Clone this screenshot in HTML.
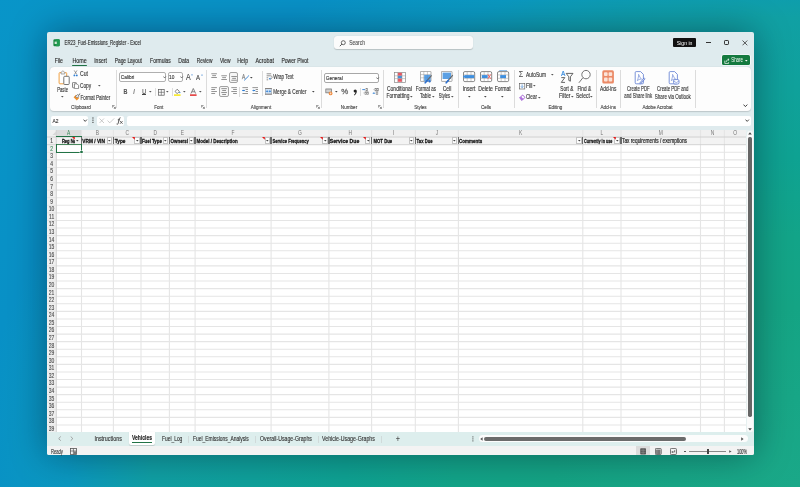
<!DOCTYPE html>
<html><head><meta charset="utf-8"><style>
html,body{margin:0;padding:0;}
body{width:800px;height:487px;overflow:hidden;position:relative;font-family:"Liberation Sans",sans-serif;
background:radial-gradient(1380px 1000px at 800px 487px,#1aa888 0%,#14a484 18%,#12a488 25%,#0ea292 33%,#10a0a4 47%,#0a98c0 53%,#0890c6 60%,#0894c6 70%,#0896cc 82%);}
.t{position:absolute;white-space:pre;line-height:10px;transform-origin:0 5px;}
.r{position:absolute;}
</style></head><body><div style="position:absolute;left:0;top:0;width:800px;height:487px;filter:grayscale(0.01)">
<div class="r" style="left:47.00px;top:32.00px;width:707.00px;height:423.40px;background:#dfebee;border-radius:2px;box-shadow:0 0 36px rgba(0,10,30,0.42);"></div>
<svg class="r" style="left:52.60px;top:38.70px;" width="8" height="8" viewBox="0 0 8 8"><rect x="0.4" y="0.3" width="6.3" height="7" rx="1.2" fill="#17853f"/><rect x="2.6" y="0.3" width="4.1" height="7" rx="0.8" fill="#1f9a50"/><rect x="1.6" y="2.6" width="2.2" height="2.4" fill="#cfe8d6"/></svg>
<div class="r" style="left:334.20px;top:36.30px;width:138.80px;height:12.90px;background:#fbfbfb;border-radius:3px;box-shadow:0 0.5px 1px rgba(0,0,0,0.18);"></div>
<svg class="r" style="left:338.50px;top:39.50px;" width="7" height="7" viewBox="0 0 7 7"><circle cx="4.3" cy="2.7" r="2" fill="none" stroke="#444" stroke-width="0.8"/><line x1="2.9" y1="4.1" x2="0.8" y2="6.2" stroke="#444" stroke-width="0.9"/></svg>
<div class="r" style="left:673.20px;top:37.90px;width:22.60px;height:9.20px;background:#111;border-radius:1px;"></div>
<div class="r" style="left:706.30px;top:42.30px;width:4.40px;height:0.80px;background:#333;"></div>
<div class="r" style="left:724.20px;top:40.40px;width:4.80px;height:4.60px;border:0.8px solid #333;border-radius:1.2px;box-sizing:border-box;"></div>
<svg class="r" style="left:742.00px;top:40.00px;" width="6" height="6" viewBox="0 0 6 6"><path d="M0.5 0.5 L5.3 5.3 M5.3 0.5 L0.5 5.3" stroke="#333" stroke-width="0.8"/></svg>
<div class="r" style="left:72.40px;top:64.60px;width:14.30px;height:1.30px;background:#217346;border-radius:1px;"></div>
<div class="r" style="left:722.20px;top:54.50px;width:27.40px;height:10.80px;background:#137a3f;border-radius:1.6px;box-shadow:0 0 0 0.6px #fff;"></div>
<svg class="r" style="left:724.20px;top:57.50px;" width="6" height="6" viewBox="0 0 6 6"><path d="M0.8 2.6 V5.4 H4.6 V4.2" fill="none" stroke="#fff" stroke-width="0.7"/><path d="M2.2 4 C2.4 2.2 3.4 1.6 5 1.6 M3.9 0.6 L5.1 1.6 L3.9 2.6" fill="none" stroke="#fff" stroke-width="0.7"/></svg>
<svg class="r" style="left:745.00px;top:59.50px;" width="3" height="2" viewBox="0 0 3 2"><path d="M0 0 H2.6 L1.3 1.5Z" fill="#fff"/></svg>
<div class="r" style="left:50.00px;top:67.00px;width:701.30px;height:44.00px;background:#fdfdfd;border-radius:4px;box-shadow:0 0.8px 1.2px rgba(0,0,0,0.16);"></div>
<div class="r" style="left:116.40px;top:69.50px;width:0.60px;height:38.50px;background:#dcdcdc;"></div>
<div class="r" style="left:206.40px;top:69.50px;width:0.60px;height:38.50px;background:#dcdcdc;"></div>
<div class="r" style="left:321.30px;top:69.50px;width:0.60px;height:38.50px;background:#dcdcdc;"></div>
<div class="r" style="left:383.00px;top:69.50px;width:0.60px;height:38.50px;background:#dcdcdc;"></div>
<div class="r" style="left:458.30px;top:69.50px;width:0.60px;height:38.50px;background:#dcdcdc;"></div>
<div class="r" style="left:513.60px;top:69.50px;width:0.60px;height:38.50px;background:#dcdcdc;"></div>
<div class="r" style="left:596.00px;top:69.50px;width:0.60px;height:38.50px;background:#dcdcdc;"></div>
<div class="r" style="left:620.00px;top:69.50px;width:0.60px;height:38.50px;background:#dcdcdc;"></div>
<div class="r" style="left:694.50px;top:69.50px;width:0.60px;height:38.50px;background:#dcdcdc;"></div>
<svg class="r" style="left:111.50px;top:104.80px;" width="4" height="4" viewBox="0 0 4 4"><path d="M0.4 0.4 H2.6 M0.4 0.4 V2.6" stroke="#555" stroke-width="0.6" fill="none"/><path d="M1.4 1.4 L3.4 3.4 M3.4 1.8 V3.4 H1.8" stroke="#555" stroke-width="0.6" fill="none"/></svg>
<svg class="r" style="left:201.20px;top:104.80px;" width="4" height="4" viewBox="0 0 4 4"><path d="M0.4 0.4 H2.6 M0.4 0.4 V2.6" stroke="#555" stroke-width="0.6" fill="none"/><path d="M1.4 1.4 L3.4 3.4 M3.4 1.8 V3.4 H1.8" stroke="#555" stroke-width="0.6" fill="none"/></svg>
<svg class="r" style="left:316.20px;top:104.80px;" width="4" height="4" viewBox="0 0 4 4"><path d="M0.4 0.4 H2.6 M0.4 0.4 V2.6" stroke="#555" stroke-width="0.6" fill="none"/><path d="M1.4 1.4 L3.4 3.4 M3.4 1.8 V3.4 H1.8" stroke="#555" stroke-width="0.6" fill="none"/></svg>
<svg class="r" style="left:378.20px;top:104.80px;" width="4" height="4" viewBox="0 0 4 4"><path d="M0.4 0.4 H2.6 M0.4 0.4 V2.6" stroke="#555" stroke-width="0.6" fill="none"/><path d="M1.4 1.4 L3.4 3.4 M3.4 1.8 V3.4 H1.8" stroke="#555" stroke-width="0.6" fill="none"/></svg>
<svg class="r" style="left:743.00px;top:103.80px;" width="5" height="3.5" viewBox="0 0 5 3.5"><path d="M0.5 0.6 L2.4 2.6 L4.3 0.6" fill="none" stroke="#333" stroke-width="0.95"/></svg>
<svg class="r" style="left:57.60px;top:69.80px;" width="13" height="16" viewBox="0 0 13 16"><rect x="1.1" y="2.6" width="7.6" height="11.2" rx="0.8" fill="#fff" stroke="#f0a040" stroke-width="1"/><path d="M3.0 4.0 V2.4 L4.9 0.8 L6.8 2.4 V4.0Z" fill="#f4f4f4" stroke="#888" stroke-width="0.7"/><rect x="5.8" y="6.3" width="5.4" height="8.2" rx="0.8" fill="#fff" stroke="#666" stroke-width="0.9"/></svg>
<svg class="r" style="left:61.10px;top:95.80px;" width="3" height="2" viewBox="0 0 3 2"><path d="M0 0 H2.6 L1.3 1.5Z" fill="#555"/></svg>
<svg class="r" style="left:73.40px;top:70.40px;" width="6" height="7" viewBox="0 0 6 7"><path d="M1.2 0.4 L3.6 4.2 M4.0 0.4 L1.6 4.2" stroke="#777" stroke-width="0.7"/><circle cx="1.4" cy="5.4" r="0.9" fill="#2b7cd3"/><circle cx="3.8" cy="5.4" r="0.9" fill="#2b7cd3"/></svg>
<svg class="r" style="left:72.00px;top:82.20px;" width="8" height="7" viewBox="0 0 8 7"><path d="M2.0 5.8 H1.2 Q0.5 5.8 0.5 5.1 V1.1 Q0.5 0.4 1.2 0.4 H3.6 Q4.3 0.4 4.3 1.1 V1.6" fill="none" stroke="#555" stroke-width="0.7"/><path d="M2.4 1.8 H5.0 L6.6 3.4 V6.2 Q6.6 6.7 6.1 6.7 H2.9 Q2.4 6.7 2.4 6.2Z" fill="#fff" stroke="#555" stroke-width="0.7"/></svg>
<svg class="r" style="left:97.60px;top:85.20px;" width="3" height="2" viewBox="0 0 3 2"><path d="M0 0 H2.6 L1.3 1.5Z" fill="#555"/></svg>
<svg class="r" style="left:72.60px;top:92.80px;" width="8" height="8" viewBox="0 0 8 8"><path d="M0.6 4.2 L3.0 1.8 L6.2 5.0 L3.8 7.4Z" fill="#f0902a"/><path d="M2.6 3.4 L4.6 1.4 L6.2 3.0 L4.2 5.0Z" fill="#dfe6ee" stroke="#666" stroke-width="0.6"/><path d="M5.4 2.2 L7.2 0.6" stroke="#555" stroke-width="1.0"/></svg>
<div class="r" style="left:119.40px;top:72.00px;width:46.60px;height:10.30px;border:0.7px solid #b0b0b0;border-radius:2px;box-sizing:border-box;background:#fff;"></div>
<svg class="r" style="left:162.60px;top:76.40px;" width="4" height="3" viewBox="0 0 4 3"><path d="M0.4 0.5 L1.6 1.9 L2.8 0.5" fill="none" stroke="#444" stroke-width="0.7"/></svg>
<div class="r" style="left:167.50px;top:72.00px;width:15.50px;height:10.30px;border:0.7px solid #b0b0b0;border-radius:2px;box-sizing:border-box;background:#fff;"></div>
<svg class="r" style="left:179.60px;top:76.40px;" width="4" height="3" viewBox="0 0 4 3"><path d="M0.4 0.5 L1.6 1.9 L2.8 0.5" fill="none" stroke="#444" stroke-width="0.7"/></svg>
<svg class="r" style="left:190.50px;top:73.50px;" width="2" height="2" viewBox="0 0 2 2"><path d="M0 1.6 L1 0.4 L2 1.6" fill="none" stroke="#2a7ad0" stroke-width="0.6"/></svg>
<svg class="r" style="left:200.50px;top:73.80px;" width="2" height="2" viewBox="0 0 2 2"><path d="M0 0.4 L1 1.6 L2 0.4" fill="none" stroke="#2a7ad0" stroke-width="0.6"/></svg>
<div class="r" style="left:142.40px;top:94.20px;width:3.60px;height:0.60px;background:#444;"></div>
<svg class="r" style="left:149.30px;top:91.20px;" width="3" height="2" viewBox="0 0 3 2"><path d="M0 0 H2.6 L1.3 1.5Z" fill="#555"/></svg>
<div class="r" style="left:155.00px;top:87.50px;width:0.50px;height:8.00px;background:#ddd;"></div>
<svg class="r" style="left:157.50px;top:88.50px;" width="7" height="7" viewBox="0 0 7 7"><rect x="0.4" y="0.4" width="5.8" height="5.8" fill="none" stroke="#555" stroke-width="0.7"/><path d="M3.3 0.4 V6.2 M0.4 3.3 H6.2" stroke="#555" stroke-width="0.6"/></svg>
<svg class="r" style="left:166.45px;top:91.20px;" width="3" height="2" viewBox="0 0 3 2"><path d="M0 0 H2.6 L1.3 1.5Z" fill="#555"/></svg>
<div class="r" style="left:172.00px;top:87.50px;width:0.50px;height:8.00px;background:#ddd;"></div>
<svg class="r" style="left:174.20px;top:87.60px;" width="7" height="8" viewBox="0 0 7 8"><path d="M1 3.5 L3.2 1.2 L5.4 3.5 L3.2 5.6Z" fill="none" stroke="#555" stroke-width="0.7"/><circle cx="5.8" cy="4.6" r="0.7" fill="#2a7ad0"/><rect x="0" y="6.4" width="6.6" height="1.4" fill="#f5e400"/></svg>
<svg class="r" style="left:183.30px;top:91.20px;" width="3" height="2" viewBox="0 0 3 2"><path d="M0 0 H2.6 L1.3 1.5Z" fill="#555"/></svg>
<svg class="r" style="left:189.80px;top:87.60px;" width="7" height="8" viewBox="0 0 7 8"><path d="M0.9 5.6 L3.3 0.5 L5.7 5.6 M1.9 3.8 H4.7" fill="none" stroke="#555" stroke-width="0.7"/><rect x="0" y="6.4" width="6.6" height="1.4" fill="#e02020"/></svg>
<svg class="r" style="left:198.70px;top:91.20px;" width="3" height="2" viewBox="0 0 3 2"><path d="M0 0 H2.6 L1.3 1.5Z" fill="#555"/></svg>
<svg class="r" style="left:210.90px;top:73.00px;" width="9" height="9" viewBox="0 0 9 9"><rect x="0.3" y="0.4" width="5.6" height="0.8" fill="#7a7a7a"/><rect x="1.2" y="2.3" width="3.8" height="0.8" fill="#7a7a7a"/><rect x="0.3" y="4.2" width="5.6" height="0.8" fill="#7a7a7a"/></svg>
<svg class="r" style="left:220.90px;top:74.60px;" width="9" height="9" viewBox="0 0 9 9"><rect x="0.3" y="0.4" width="5.6" height="0.8" fill="#7a7a7a"/><rect x="1.2" y="2.3" width="3.8" height="0.8" fill="#7a7a7a"/><rect x="0.3" y="4.2" width="5.6" height="0.8" fill="#7a7a7a"/></svg>
<div class="r" style="left:229.30px;top:71.80px;width:9.20px;height:10.80px;border:0.9px solid #a2a2a2;border-radius:2px;box-sizing:border-box;background:#f6f6f6;"></div>
<svg class="r" style="left:231.00px;top:75.00px;" width="9" height="9" viewBox="0 0 9 9"><rect x="0.3" y="1.0" width="5.6" height="0.8" fill="#7a7a7a"/><rect x="1.2" y="2.9" width="3.8" height="0.8" fill="#7a7a7a"/><rect x="0.3" y="4.8" width="5.6" height="0.8" fill="#7a7a7a"/></svg>
<svg class="r" style="left:241.00px;top:72.80px;" width="10" height="9" viewBox="0 0 10 9"><path d="M1.2 6.2 L2.6 1.2 L4.0 6.2 M1.7 4.4 H3.5" fill="none" stroke="#777" stroke-width="0.7"/><path d="M3.2 7.4 L7.6 3.0" stroke="#2b7cd3" stroke-width="0.9"/><path d="M7.2 2.2 L8.2 2.8 L7.8 3.6" fill="#2b7cd3"/></svg>
<svg class="r" style="left:249.70px;top:76.50px;" width="3" height="2" viewBox="0 0 3 2"><path d="M0 0 H2.6 L1.3 1.5Z" fill="#444"/></svg>
<svg class="r" style="left:210.90px;top:87.40px;" width="9" height="9" viewBox="0 0 9 9"><rect x="0.3" y="0.3" width="5.6" height="0.8" fill="#7a7a7a"/><rect x="0.3" y="2.2" width="3.8" height="0.8" fill="#7a7a7a"/><rect x="0.3" y="4.1" width="5.6" height="0.8" fill="#7a7a7a"/><rect x="0.3" y="6.0" width="3.8" height="0.8" fill="#7a7a7a"/></svg>
<div class="r" style="left:219.40px;top:86.00px;width:9.40px;height:11.00px;border:0.9px solid #a2a2a2;border-radius:2px;box-sizing:border-box;background:#f6f6f6;"></div>
<svg class="r" style="left:221.10px;top:87.70px;" width="9" height="9" viewBox="0 0 9 9"><rect x="0.3" y="0.3" width="5.6" height="0.8" fill="#7a7a7a"/><rect x="1.2" y="2.2" width="3.8" height="0.8" fill="#7a7a7a"/><rect x="0.3" y="4.1" width="5.6" height="0.8" fill="#7a7a7a"/><rect x="1.2" y="6.0" width="3.8" height="0.8" fill="#7a7a7a"/></svg>
<svg class="r" style="left:230.80px;top:87.40px;" width="9" height="9" viewBox="0 0 9 9"><rect x="0.3" y="0.3" width="5.6" height="0.8" fill="#7a7a7a"/><rect x="2.1" y="2.2" width="3.8" height="0.8" fill="#7a7a7a"/><rect x="0.3" y="4.1" width="5.6" height="0.8" fill="#7a7a7a"/><rect x="2.1" y="6.0" width="3.8" height="0.8" fill="#7a7a7a"/></svg>
<div class="r" style="left:239.10px;top:86.50px;width:0.60px;height:10.00px;background:#dcdcdc;"></div>
<svg class="r" style="left:241.70px;top:87.40px;" width="8" height="8" viewBox="0 0 8 8"><rect x="0.4" y="0.3" width="5.6" height="0.8" fill="#7a7a7a"/><rect x="3.6" y="2.2" width="2.4" height="0.8" fill="#7a7a7a"/><rect x="3.6" y="4.1" width="2.4" height="0.8" fill="#7a7a7a"/><rect x="0.4" y="6.0" width="5.6" height="0.8" fill="#7a7a7a"/><path d="M0.2 3.5 H2.2" stroke="#2b7cd3" stroke-width="1.1"/><path d="M1.8 2.4 L3.2 3.5 L1.8 4.6Z" fill="#2b7cd3"/></svg>
<svg class="r" style="left:251.80px;top:87.40px;" width="8" height="8" viewBox="0 0 8 8"><rect x="0.4" y="0.3" width="5.6" height="0.8" fill="#7a7a7a"/><rect x="3.6" y="2.2" width="2.4" height="0.8" fill="#7a7a7a"/><rect x="3.6" y="4.1" width="2.4" height="0.8" fill="#7a7a7a"/><rect x="0.4" y="6.0" width="5.6" height="0.8" fill="#7a7a7a"/><path d="M1.2 3.5 H3.2" stroke="#2b7cd3" stroke-width="1.1"/><path d="M1.6 2.4 L0.2 3.5 L1.6 4.6Z" fill="#2b7cd3"/></svg>
<div class="r" style="left:261.50px;top:70.50px;width:0.60px;height:25.00px;background:#dcdcdc;"></div>
<svg class="r" style="left:265.80px;top:73.40px;" width="8" height="8" viewBox="0 0 8 8"><path d="M0.6 0.8 H5.2 M0.6 2.8 H4.6 C6.6 2.8 6.6 5.8 4.6 5.8 H3.6 M0.6 4.8 H2.2 M0.6 6.8 H2.2" fill="none" stroke="#777" stroke-width="0.8"/><path d="M4.4 4.6 L2.8 5.8 L4.4 7.0Z" fill="#2b7cd3"/></svg>
<svg class="r" style="left:265.00px;top:87.60px;" width="8" height="7" viewBox="0 0 8 7"><rect x="0" y="0" width="6.8" height="6.6" fill="#cfe2f6"/><path d="M0 0.4 H6.8 M0 6.2 H6.8" stroke="#6b5a4e" stroke-width="0.8"/><path d="M0.4 0 V6.6 M6.4 0 V6.6" stroke="#8a8a8a" stroke-width="0.5"/><path d="M0.8 3.3 H2.6 M4.2 3.3 H6.0" stroke="#2b7cd3" stroke-width="0.9"/><path d="M2.2 2.2 L3.2 3.3 L2.2 4.4Z M4.6 2.2 L3.6 3.3 L4.6 4.4Z" fill="#2b7cd3"/></svg>
<svg class="r" style="left:312.20px;top:91.20px;" width="3" height="2" viewBox="0 0 3 2"><path d="M0 0 H2.6 L1.3 1.5Z" fill="#444"/></svg>
<div class="r" style="left:324.40px;top:72.60px;width:55.10px;height:10.00px;border:0.7px solid #a8a8a8;border-radius:2px;box-sizing:border-box;background:#fff;"></div>
<svg class="r" style="left:375.80px;top:76.60px;" width="4" height="3" viewBox="0 0 4 3"><path d="M0.4 0.5 L1.6 1.9 L2.8 0.5" fill="none" stroke="#444" stroke-width="0.7"/></svg>
<svg class="r" style="left:325.00px;top:88.40px;" width="9" height="8" viewBox="0 0 9 8"><rect x="0.3" y="0.6" width="6.6" height="4.6" rx="0.4" fill="#8a8a8a"/><rect x="1.2" y="1.5" width="4.8" height="2.8" fill="#d0d0d0"/><circle cx="5.6" cy="5.4" r="1.9" fill="#f08a3c"/><path d="M5.6 4.4 V6.4 M4.8 5.4 H6.4" stroke="#fff" stroke-width="0.5"/></svg>
<svg class="r" style="left:334.70px;top:91.20px;" width="3" height="2" viewBox="0 0 3 2"><path d="M0 0 H2.6 L1.3 1.5Z" fill="#444"/></svg>
<svg class="r" style="left:352.60px;top:88.80px;" width="5" height="7" viewBox="0 0 5 7"><circle cx="2.2" cy="2.0" r="1.6" fill="#222"/><path d="M3.6 2.2 C3.8 4.2 2.8 5.6 1.2 6.4 L0.9 5.8 C2.0 5.0 2.6 4.0 2.4 3.0Z" fill="#222"/></svg>
<div class="r" style="left:359.70px;top:87.50px;width:0.60px;height:8.50px;background:#dcdcdc;"></div>
<svg class="r" style="left:361.60px;top:88.20px;" width="8" height="8" viewBox="0 0 8 8"><path d="M0.3 1.6 H2.3" stroke="#2b7cd3" stroke-width="0.9"/><path d="M2.0 0.7 L3.0 1.6 L2.0 2.5Z" fill="#2b7cd3"/><rect x="4.0" y="0.3" width="1.6" height="2.6" fill="none" stroke="#777" stroke-width="0.6"/><rect x="1.6" y="4.6" width="0.7" height="0.7" fill="#777"/><rect x="3.0" y="3.9" width="1.4" height="2.6" fill="none" stroke="#777" stroke-width="0.6"/><rect x="5.0" y="3.9" width="1.4" height="2.6" fill="none" stroke="#777" stroke-width="0.6"/></svg>
<svg class="r" style="left:372.20px;top:88.20px;" width="8" height="8" viewBox="0 0 8 8"><rect x="1.6" y="1.4" width="0.7" height="0.7" fill="#777"/><rect x="3.0" y="0.3" width="1.4" height="2.6" fill="none" stroke="#777" stroke-width="0.6"/><rect x="5.0" y="0.3" width="1.4" height="2.6" fill="none" stroke="#777" stroke-width="0.6"/><rect x="4.2" y="3.9" width="1.6" height="2.6" fill="none" stroke="#777" stroke-width="0.6"/><path d="M1.2 5.2 H3.2" stroke="#2b7cd3" stroke-width="0.9"/><path d="M1.5 4.3 L0.5 5.2 L1.5 6.1Z" fill="#2b7cd3"/></svg>
<svg class="r" style="left:394.20px;top:71.60px;" width="12" height="11" viewBox="0 0 12 11"><rect x="0.4" y="0.4" width="11" height="10" fill="#fff" stroke="#888" stroke-width="0.7"/><rect x="3.8" y="0.8" width="4.2" height="3" fill="#ee5560"/><rect x="3.8" y="3.9" width="4.2" height="2.6" fill="#3d8fe0"/><rect x="3.8" y="6.6" width="4.2" height="3.2" fill="#ee5560"/><path d="M0.4 3.8 H11.4 M0.4 6.6 H11.4 M3.8 0.4 V10.4 M8 0.4 V10.4" stroke="#999" stroke-width="0.5"/></svg>
<svg class="r" style="left:409.70px;top:95.60px;" width="3" height="2" viewBox="0 0 3 2"><path d="M0 0 H2.6 L1.3 1.5Z" fill="#555"/></svg>
<svg class="r" style="left:420.20px;top:71.40px;" width="13" height="13" viewBox="0 0 13 13"><rect x="0.4" y="0.4" width="10.6" height="10" rx="0.6" fill="#fff" stroke="#888" stroke-width="0.7"/><path d="M0.4 3.6 H11 M0.4 6.8 H11 M3.8 0.4 V10.4 M7.4 0.4 V10.4" stroke="#999" stroke-width="0.5"/><rect x="4.2" y="3.9" width="6.4" height="6.2" fill="#3d8fe0" opacity="0.85"/><path d="M6.4 10.4 L11.6 4.4" stroke="#666" stroke-width="1.1"/><path d="M5.2 11.8 L7.4 9.4" stroke="#2b6fd0" stroke-width="1.6" stroke-linecap="round"/><circle cx="9.6" cy="10.4" r="1.1" fill="#2b6fd0"/></svg>
<svg class="r" style="left:432.20px;top:95.60px;" width="3" height="2" viewBox="0 0 3 2"><path d="M0 0 H2.6 L1.3 1.5Z" fill="#555"/></svg>
<svg class="r" style="left:441.20px;top:71.40px;" width="13" height="13" viewBox="0 0 13 13"><rect x="0.4" y="0.4" width="10.6" height="10" rx="0.6" fill="#fff" stroke="#888" stroke-width="0.7"/><rect x="1.6" y="1.6" width="8.4" height="6.4" fill="#3d8fe0" opacity="0.85"/><path d="M6.6 10.2 L11.8 4.2" stroke="#666" stroke-width="1.1"/><path d="M5.2 11.8 L7.4 9.4" stroke="#2b6fd0" stroke-width="1.6" stroke-linecap="round"/></svg>
<svg class="r" style="left:450.70px;top:95.60px;" width="3" height="2" viewBox="0 0 3 2"><path d="M0 0 H2.6 L1.3 1.5Z" fill="#555"/></svg>
<svg class="r" style="left:463.40px;top:70.40px;" width="13" height="13" viewBox="0 0 13 13"><rect x="0.5" y="1.6" width="11.2" height="10" rx="1.4" fill="#fff" stroke="#6a6a6a" stroke-width="0.8"/><path d="M0.5 4.9 H11.7 M0.5 8.3 H11.7 M4.2 1.6 V11.6 M8 1.6 V11.6" stroke="#999" stroke-width="0.5"/><rect x="1.8" y="5.1" width="9.4" height="3" fill="#3d8fe0"/><path d="M2.4 6.6 H0.0" stroke="#3d8fe0" stroke-width="1"/><path d="M1.6 5.0 L-0.2 6.6 L1.6 8.2Z" fill="#3d8fe0"/></svg>
<svg class="r" style="left:480.20px;top:70.40px;" width="13" height="13" viewBox="0 0 13 13"><rect x="0.5" y="1.6" width="11.2" height="10" rx="1.4" fill="#fff" stroke="#6a6a6a" stroke-width="0.8"/><path d="M0.5 4.9 H11.7 M0.5 8.3 H11.7 M4.2 1.6 V11.6 M8 1.6 V11.6" stroke="#999" stroke-width="0.5"/><rect x="1.8" y="5.1" width="5.8" height="3" fill="#3d8fe0"/><path d="M7.8 4.4 L10.8 8.8 M10.8 4.4 L7.8 8.8" stroke="#f04848" stroke-width="0.8"/></svg>
<svg class="r" style="left:497.20px;top:70.40px;" width="13" height="13" viewBox="0 0 13 13"><rect x="0.5" y="1.6" width="11.2" height="10" rx="1.4" fill="#fff" stroke="#6a6a6a" stroke-width="0.8"/><path d="M0.5 4.9 H11.7 M0.5 8.3 H11.7 M4.2 1.6 V11.6 M8 1.6 V11.6" stroke="#999" stroke-width="0.5"/><rect x="3.2" y="5.1" width="5.8" height="3" fill="#3d8fe0"/><path d="M2.2 0.3 H10" stroke="#3d8fe0" stroke-width="0.7"/></svg>
<svg class="r" style="left:467.70px;top:95.60px;" width="3" height="2" viewBox="0 0 3 2"><path d="M0 0 H2.6 L1.3 1.5Z" fill="#444"/></svg>
<svg class="r" style="left:484.30px;top:95.60px;" width="3" height="2" viewBox="0 0 3 2"><path d="M0 0 H2.6 L1.3 1.5Z" fill="#444"/></svg>
<svg class="r" style="left:501.40px;top:95.60px;" width="3" height="2" viewBox="0 0 3 2"><path d="M0 0 H2.6 L1.3 1.5Z" fill="#444"/></svg>
<svg class="r" style="left:551.30px;top:73.60px;" width="3" height="2" viewBox="0 0 3 2"><path d="M0 0 H2.6 L1.3 1.5Z" fill="#555"/></svg>
<svg class="r" style="left:518.80px;top:82.80px;" width="7" height="7" viewBox="0 0 7 7"><rect x="0.4" y="0.4" width="5.4" height="5.6" fill="none" stroke="#555" stroke-width="0.6"/><path d="M3.1 1.4 V4.6 M1.9 3.4 L3.1 4.6 L4.3 3.4" stroke="#2a7ad0" stroke-width="0.6" fill="none"/></svg>
<svg class="r" style="left:533.00px;top:85.40px;" width="3" height="2" viewBox="0 0 3 2"><path d="M0 0 H2.6 L1.3 1.5Z" fill="#555"/></svg>
<svg class="r" style="left:518.80px;top:94.00px;" width="7" height="7" viewBox="0 0 7 7"><path d="M0.6 4 L3.6 1 L6 3.4 L3 6.4Z" fill="none" stroke="#8a3ec8" stroke-width="0.8"/><path d="M0.6 4 L2 2.6 L4.4 5 L3 6.4Z" fill="#b070e0"/></svg>
<svg class="r" style="left:537.70px;top:96.50px;" width="3" height="2" viewBox="0 0 3 2"><path d="M0 0 H2.6 L1.3 1.5Z" fill="#555"/></svg>
<svg class="r" style="left:560.00px;top:70.00px;" width="15" height="14" viewBox="0 0 15 14"><path d="M1.4 6.0 L3.2 1.0 L5.0 6.0 M2.0 4.4 H4.4" fill="none" stroke="#3d8fe0" stroke-width="0.9"/><path d="M1.3 7.6 H4.8 L1.3 12.4 H5.0" fill="none" stroke="#555" stroke-width="0.9"/><path d="M6.2 3.4 H13.0 L10.4 6.8 V11.2 L8.8 10.4 V6.8Z" fill="none" stroke="#555" stroke-width="0.9" stroke-linejoin="round"/></svg>
<svg class="r" style="left:570.70px;top:95.60px;" width="3" height="2" viewBox="0 0 3 2"><path d="M0 0 H2.6 L1.3 1.5Z" fill="#555"/></svg>
<svg class="r" style="left:577.60px;top:69.40px;" width="14" height="15" viewBox="0 0 14 15"><circle cx="8.0" cy="5.6" r="4.2" fill="none" stroke="#666" stroke-width="0.9"/><path d="M5.0 8.6 L0.9 13.8" stroke="#666" stroke-width="0.9"/></svg>
<svg class="r" style="left:590.00px;top:95.60px;" width="3" height="2" viewBox="0 0 3 2"><path d="M0 0 H2.6 L1.3 1.5Z" fill="#555"/></svg>
<svg class="r" style="left:602.20px;top:70.10px;" width="13" height="14" viewBox="0 0 13 14"><rect x="0.3" y="0.3" width="11.6" height="13.3" rx="1.6" fill="#ec8a66"/><rect x="2.0" y="2.2" width="3.6" height="3.8" rx="0.9" fill="#fbe3d8"/><rect x="6.6" y="2.2" width="3.6" height="3.8" rx="0.9" fill="#fbe3d8"/><rect x="2.0" y="7.6" width="3.6" height="3.8" rx="0.9" fill="#fbe3d8"/><rect x="6.6" y="7.6" width="3.6" height="3.8" rx="0.9" fill="#fbe3d8"/></svg>
<svg class="r" style="left:633.80px;top:70.60px;" width="12" height="14" viewBox="0 0 12 14"><path d="M1.2 1.6 Q1.2 0.6 2.2 0.6 H6.6 L9.4 3.4 V11.8 Q9.4 12.8 8.4 12.8 H2.2 Q1.2 12.8 1.2 11.8Z" fill="#fff" stroke="#5a78d0" stroke-width="0.8"/><path d="M3.4 9.6 C4.2 7.2 4.8 4.6 4.6 3.4 C5.4 5 6.4 7.4 7.6 8.2 C6 8 4.6 8.6 3.4 9.6Z" fill="none" stroke="#5a78d0" stroke-width="0.6"/><path d="M6.2 12.4 L10.4 7.6" stroke="#5a78d0" stroke-width="1.8" stroke-linecap="round"/><path d="M6.2 12.4 L10.4 7.6" stroke="#fff" stroke-width="0.7" stroke-linecap="round"/></svg>
<svg class="r" style="left:668.40px;top:70.60px;" width="12" height="14" viewBox="0 0 12 14"><path d="M1.2 1.6 Q1.2 0.6 2.2 0.6 H6.6 L9.4 3.4 V11.8 Q9.4 12.8 8.4 12.8 H2.2 Q1.2 12.8 1.2 11.8Z" fill="#fff" stroke="#5a78d0" stroke-width="0.8"/><path d="M3.4 9.6 C4.2 7.2 4.8 4.6 4.6 3.4 C5.4 5 6.4 7.4 7.6 8.2 C6 8 4.6 8.6 3.4 9.6Z" fill="none" stroke="#5a78d0" stroke-width="0.6"/><rect x="5.6" y="8.6" width="5.4" height="4.4" rx="1.2" fill="#fff" stroke="#5a78d0" stroke-width="0.8"/><path d="M5.8 10.2 L8.3 11.6 L10.8 10.2" fill="none" stroke="#5a78d0" stroke-width="0.6"/></svg>
<div class="r" style="left:50.60px;top:115.60px;width:37.50px;height:10.00px;background:#fff;border-radius:2px;"></div>
<svg class="r" style="left:82.80px;top:119.20px;" width="5" height="3.5" viewBox="0 0 5 3.5"><path d="M0.5 0.6 L2.2 2.4 L3.9 0.6" fill="none" stroke="#333" stroke-width="0.9"/></svg>
<svg class="r" style="left:91.60px;top:117.40px;" width="2" height="7" viewBox="0 0 2 7"><rect x="0.4" y="0.4" width="1.1" height="1.2" fill="#444"/><rect x="0.4" y="2.6" width="1.1" height="1.2" fill="#444"/><rect x="0.4" y="4.8" width="1.1" height="1.2" fill="#444"/></svg>
<div class="r" style="left:96.90px;top:115.60px;width:26.90px;height:10.00px;background:#fff;border-radius:2px;"></div>
<svg class="r" style="left:98.80px;top:117.60px;" width="6" height="6" viewBox="0 0 6 6"><path d="M0.5 0.5 L5 5 M5 0.5 L0.5 5" stroke="#aaa" stroke-width="0.6"/></svg>
<svg class="r" style="left:107.00px;top:118.00px;" width="8" height="6" viewBox="0 0 8 6"><path d="M0.5 2.6 L2.8 4.8 L7.2 0.4" fill="none" stroke="#aaa" stroke-width="0.6"/></svg>
<svg class="r" style="left:116.20px;top:116.80px;" width="8" height="8" viewBox="0 0 8 8"><path d="M4.6 0.8 C3.6 0.6 3.2 1.4 3.0 2.6 L2.2 6.4 C2.0 7.2 1.4 7.4 0.6 7.0 M1.8 2.8 H4.0" fill="none" stroke="#333" stroke-width="0.8"/><path d="M4.0 4.0 L6.6 6.8 M6.6 4.0 L4.0 6.8" stroke="#333" stroke-width="0.7"/></svg>
<div class="r" style="left:126.90px;top:115.60px;width:623.70px;height:10.00px;background:#fff;border-radius:2px;"></div>
<svg class="r" style="left:745.20px;top:118.60px;" width="5" height="3.5" viewBox="0 0 5 3.5"><path d="M0.5 0.6 L2.2 2.4 L3.9 0.6" fill="none" stroke="#333" stroke-width="0.9"/></svg>
<div class="r" style="left:47.00px;top:129.70px;width:699.00px;height:302.60px;background:#fff;"></div>
<div class="r" style="left:47.00px;top:129.70px;width:699.00px;height:6.60px;background:#f0f0f0;"></div>
<div class="r" style="left:55.90px;top:129.70px;width:25.60px;height:6.60px;background:#dcdcdc;"></div>
<div class="r" style="left:47.00px;top:136.30px;width:8.90px;height:296.00px;background:#f0f0f0;"></div>
<div class="r" style="left:55.90px;top:136.30px;width:690.10px;height:8.10px;background:#f3f3f3;"></div>
<svg class="r" style="left:47.00px;top:129.70px;" width="699" height="302.6" viewBox="0 0 699 302.6"><line x1="0" y1="22.28" x2="699" y2="22.28" stroke="#e5e5e5" stroke-width="1.1"/><line x1="0" y1="29.85" x2="699" y2="29.85" stroke="#e5e5e5" stroke-width="1.1"/><line x1="0" y1="37.43" x2="699" y2="37.43" stroke="#e5e5e5" stroke-width="1.1"/><line x1="0" y1="45.00" x2="699" y2="45.00" stroke="#e5e5e5" stroke-width="1.1"/><line x1="0" y1="52.58" x2="699" y2="52.58" stroke="#e5e5e5" stroke-width="1.1"/><line x1="0" y1="60.15" x2="699" y2="60.15" stroke="#e5e5e5" stroke-width="1.1"/><line x1="0" y1="67.73" x2="699" y2="67.73" stroke="#e5e5e5" stroke-width="1.1"/><line x1="0" y1="75.30" x2="699" y2="75.30" stroke="#e5e5e5" stroke-width="1.1"/><line x1="0" y1="82.88" x2="699" y2="82.88" stroke="#e5e5e5" stroke-width="1.1"/><line x1="0" y1="90.45" x2="699" y2="90.45" stroke="#e5e5e5" stroke-width="1.1"/><line x1="0" y1="98.03" x2="699" y2="98.03" stroke="#e5e5e5" stroke-width="1.1"/><line x1="0" y1="105.60" x2="699" y2="105.60" stroke="#e5e5e5" stroke-width="1.1"/><line x1="0" y1="113.18" x2="699" y2="113.18" stroke="#e5e5e5" stroke-width="1.1"/><line x1="0" y1="120.75" x2="699" y2="120.75" stroke="#e5e5e5" stroke-width="1.1"/><line x1="0" y1="128.32" x2="699" y2="128.32" stroke="#e5e5e5" stroke-width="1.1"/><line x1="0" y1="135.90" x2="699" y2="135.90" stroke="#e5e5e5" stroke-width="1.1"/><line x1="0" y1="143.48" x2="699" y2="143.48" stroke="#e5e5e5" stroke-width="1.1"/><line x1="0" y1="151.05" x2="699" y2="151.05" stroke="#e5e5e5" stroke-width="1.1"/><line x1="0" y1="158.62" x2="699" y2="158.62" stroke="#e5e5e5" stroke-width="1.1"/><line x1="0" y1="166.20" x2="699" y2="166.20" stroke="#e5e5e5" stroke-width="1.1"/><line x1="0" y1="173.77" x2="699" y2="173.77" stroke="#e5e5e5" stroke-width="1.1"/><line x1="0" y1="181.35" x2="699" y2="181.35" stroke="#e5e5e5" stroke-width="1.1"/><line x1="0" y1="188.93" x2="699" y2="188.93" stroke="#e5e5e5" stroke-width="1.1"/><line x1="0" y1="196.50" x2="699" y2="196.50" stroke="#e5e5e5" stroke-width="1.1"/><line x1="0" y1="204.08" x2="699" y2="204.08" stroke="#e5e5e5" stroke-width="1.1"/><line x1="0" y1="211.65" x2="699" y2="211.65" stroke="#e5e5e5" stroke-width="1.1"/><line x1="0" y1="219.23" x2="699" y2="219.23" stroke="#e5e5e5" stroke-width="1.1"/><line x1="0" y1="226.80" x2="699" y2="226.80" stroke="#e5e5e5" stroke-width="1.1"/><line x1="0" y1="234.38" x2="699" y2="234.38" stroke="#e5e5e5" stroke-width="1.1"/><line x1="0" y1="241.95" x2="699" y2="241.95" stroke="#e5e5e5" stroke-width="1.1"/><line x1="0" y1="249.52" x2="699" y2="249.52" stroke="#e5e5e5" stroke-width="1.1"/><line x1="0" y1="257.10" x2="699" y2="257.10" stroke="#e5e5e5" stroke-width="1.1"/><line x1="0" y1="264.68" x2="699" y2="264.68" stroke="#e5e5e5" stroke-width="1.1"/><line x1="0" y1="272.25" x2="699" y2="272.25" stroke="#e5e5e5" stroke-width="1.1"/><line x1="0" y1="279.83" x2="699" y2="279.83" stroke="#e5e5e5" stroke-width="1.1"/><line x1="0" y1="287.40" x2="699" y2="287.40" stroke="#e5e5e5" stroke-width="1.1"/><line x1="0" y1="294.98" x2="699" y2="294.98" stroke="#e5e5e5" stroke-width="1.1"/><line x1="0" y1="302.55" x2="699" y2="302.55" stroke="#e5e5e5" stroke-width="1.1"/><line x1="34.50" y1="0" x2="34.50" y2="302.6" stroke="#e5e5e5" stroke-width="1.1"/><line x1="66.40" y1="0" x2="66.40" y2="302.6" stroke="#e5e5e5" stroke-width="1.1"/><line x1="94.00" y1="0" x2="94.00" y2="302.6" stroke="#e5e5e5" stroke-width="1.1"/><line x1="122.40" y1="0" x2="122.40" y2="302.6" stroke="#e5e5e5" stroke-width="1.1"/><line x1="148.10" y1="0" x2="148.10" y2="302.6" stroke="#e5e5e5" stroke-width="1.1"/><line x1="224.10" y1="0" x2="224.10" y2="302.6" stroke="#e5e5e5" stroke-width="1.1"/><line x1="281.90" y1="0" x2="281.90" y2="302.6" stroke="#e5e5e5" stroke-width="1.1"/><line x1="324.60" y1="0" x2="324.60" y2="302.6" stroke="#e5e5e5" stroke-width="1.1"/><line x1="368.30" y1="0" x2="368.30" y2="302.6" stroke="#e5e5e5" stroke-width="1.1"/><line x1="411.40" y1="0" x2="411.40" y2="302.6" stroke="#e5e5e5" stroke-width="1.1"/><line x1="535.80" y1="0" x2="535.80" y2="302.6" stroke="#e5e5e5" stroke-width="1.1"/><line x1="574.00" y1="0" x2="574.00" y2="302.6" stroke="#e5e5e5" stroke-width="1.1"/><line x1="653.50" y1="0" x2="653.50" y2="302.6" stroke="#e5e5e5" stroke-width="1.1"/><line x1="677.40" y1="0" x2="677.40" y2="302.6" stroke="#e5e5e5" stroke-width="1.1"/><line x1="0" y1="7.00" x2="699" y2="7.00" stroke="#cfcfcf" stroke-width="1.2"/><line x1="0" y1="14.70" x2="699" y2="14.70" stroke="#d2d2d2" stroke-width="1"/><line x1="9.30" y1="0" x2="9.30" y2="302.6" stroke="#d4d4d4" stroke-width="1.1"/></svg>
<svg class="r" style="left:51.50px;top:131.00px;" width="5" height="5" viewBox="0 0 5 5"><path d="M4 0.4 V4 H0.4Z" fill="#d8d8d8"/></svg>
<svg class="r" style="left:76.40px;top:139.60px;" width="3" height="2" viewBox="0 0 3 2"><path d="M0 0 H2.6 L1.3 1.6Z" fill="#444"/></svg>
<div class="r" style="left:80.80px;top:137.10px;width:1.40px;height:7.10px;background:#6a6a6a;"></div>
<div class="r" style="left:106.80px;top:137.30px;width:5.40px;height:6.90px;background:#fdfdfd;border:0.5px solid #c4c4c4;box-sizing:border-box;"></div>
<svg class="r" style="left:108.30px;top:139.60px;" width="3" height="2" viewBox="0 0 3 2"><path d="M0 0 H2.6 L1.3 1.6Z" fill="#444"/></svg>
<div class="r" style="left:112.70px;top:137.10px;width:1.40px;height:7.10px;background:#6a6a6a;"></div>
<div class="r" style="left:134.40px;top:137.30px;width:5.40px;height:6.90px;background:#fdfdfd;border:0.5px solid #c4c4c4;box-sizing:border-box;"></div>
<svg class="r" style="left:135.90px;top:139.60px;" width="3" height="2" viewBox="0 0 3 2"><path d="M0 0 H2.6 L1.3 1.6Z" fill="#444"/></svg>
<div class="r" style="left:140.30px;top:137.10px;width:1.40px;height:7.10px;background:#6a6a6a;"></div>
<div class="r" style="left:162.80px;top:137.30px;width:5.40px;height:6.90px;background:#fdfdfd;border:0.5px solid #c4c4c4;box-sizing:border-box;"></div>
<svg class="r" style="left:164.30px;top:139.60px;" width="3" height="2" viewBox="0 0 3 2"><path d="M0 0 H2.6 L1.3 1.6Z" fill="#444"/></svg>
<div class="r" style="left:168.70px;top:137.10px;width:1.40px;height:7.10px;background:#6a6a6a;"></div>
<div class="r" style="left:188.50px;top:137.30px;width:5.40px;height:6.90px;background:#fdfdfd;border:0.5px solid #c4c4c4;box-sizing:border-box;"></div>
<svg class="r" style="left:190.00px;top:139.60px;" width="3" height="2" viewBox="0 0 3 2"><path d="M0 0 H2.6 L1.3 1.6Z" fill="#444"/></svg>
<div class="r" style="left:194.40px;top:137.10px;width:1.40px;height:7.10px;background:#6a6a6a;"></div>
<div class="r" style="left:264.50px;top:137.30px;width:5.40px;height:6.90px;background:#fdfdfd;border:0.5px solid #c4c4c4;box-sizing:border-box;"></div>
<svg class="r" style="left:266.00px;top:139.60px;" width="3" height="2" viewBox="0 0 3 2"><path d="M0 0 H2.6 L1.3 1.6Z" fill="#444"/></svg>
<div class="r" style="left:270.40px;top:137.10px;width:1.40px;height:7.10px;background:#6a6a6a;"></div>
<div class="r" style="left:322.30px;top:137.30px;width:5.40px;height:6.90px;background:#fdfdfd;border:0.5px solid #c4c4c4;box-sizing:border-box;"></div>
<svg class="r" style="left:323.80px;top:139.60px;" width="3" height="2" viewBox="0 0 3 2"><path d="M0 0 H2.6 L1.3 1.6Z" fill="#444"/></svg>
<div class="r" style="left:328.20px;top:137.10px;width:1.40px;height:7.10px;background:#6a6a6a;"></div>
<div class="r" style="left:365.00px;top:137.30px;width:5.40px;height:6.90px;background:#fdfdfd;border:0.5px solid #c4c4c4;box-sizing:border-box;"></div>
<svg class="r" style="left:366.50px;top:139.60px;" width="3" height="2" viewBox="0 0 3 2"><path d="M0 0 H2.6 L1.3 1.6Z" fill="#444"/></svg>
<div class="r" style="left:370.90px;top:137.10px;width:1.40px;height:7.10px;background:#6a6a6a;"></div>
<div class="r" style="left:408.70px;top:137.30px;width:5.40px;height:6.90px;background:#fdfdfd;border:0.5px solid #c4c4c4;box-sizing:border-box;"></div>
<svg class="r" style="left:410.20px;top:139.60px;" width="3" height="2" viewBox="0 0 3 2"><path d="M0 0 H2.6 L1.3 1.6Z" fill="#444"/></svg>
<div class="r" style="left:414.60px;top:137.10px;width:1.40px;height:7.10px;background:#6a6a6a;"></div>
<div class="r" style="left:451.80px;top:137.30px;width:5.40px;height:6.90px;background:#fdfdfd;border:0.5px solid #c4c4c4;box-sizing:border-box;"></div>
<svg class="r" style="left:453.30px;top:139.60px;" width="3" height="2" viewBox="0 0 3 2"><path d="M0 0 H2.6 L1.3 1.6Z" fill="#444"/></svg>
<div class="r" style="left:457.70px;top:137.10px;width:1.40px;height:7.10px;background:#6a6a6a;"></div>
<div class="r" style="left:576.20px;top:137.30px;width:5.40px;height:6.90px;background:#fdfdfd;border:0.5px solid #c4c4c4;box-sizing:border-box;"></div>
<svg class="r" style="left:577.70px;top:139.60px;" width="3" height="2" viewBox="0 0 3 2"><path d="M0 0 H2.6 L1.3 1.6Z" fill="#444"/></svg>
<div class="r" style="left:582.10px;top:137.10px;width:1.40px;height:7.10px;background:#6a6a6a;"></div>
<div class="r" style="left:614.40px;top:137.30px;width:5.40px;height:6.90px;background:#fdfdfd;border:0.5px solid #c4c4c4;box-sizing:border-box;"></div>
<svg class="r" style="left:615.90px;top:139.60px;" width="3" height="2" viewBox="0 0 3 2"><path d="M0 0 H2.6 L1.3 1.6Z" fill="#444"/></svg>
<div class="r" style="left:620.30px;top:137.10px;width:1.40px;height:7.10px;background:#6a6a6a;"></div>
<svg class="r" style="left:72.10px;top:137.10px;" width="3" height="3" viewBox="0 0 3 3"><path d="M0 0 H2.8 V2.8Z" fill="#e81818"/></svg>
<svg class="r" style="left:131.90px;top:137.10px;" width="3" height="3" viewBox="0 0 3 3"><path d="M0 0 H2.8 V2.8Z" fill="#e81818"/></svg>
<svg class="r" style="left:262.10px;top:137.10px;" width="3" height="3" viewBox="0 0 3 3"><path d="M0 0 H2.8 V2.8Z" fill="#e81818"/></svg>
<svg class="r" style="left:319.50px;top:137.10px;" width="3" height="3" viewBox="0 0 3 3"><path d="M0 0 H2.8 V2.8Z" fill="#e81818"/></svg>
<svg class="r" style="left:362.70px;top:137.10px;" width="3" height="3" viewBox="0 0 3 3"><path d="M0 0 H2.8 V2.8Z" fill="#e81818"/></svg>
<svg class="r" style="left:612.50px;top:137.10px;" width="3" height="3" viewBox="0 0 3 3"><path d="M0 0 H2.8 V2.8Z" fill="#e81818"/></svg>
<div class="r" style="left:56.40px;top:136.20px;width:25.40px;height:1.10px;background:#217346;"></div>
<div class="r" style="left:56.40px;top:143.50px;width:25.40px;height:0.80px;background:#4a8a5e;"></div>
<div class="r" style="left:56.20px;top:151.50px;width:25.60px;height:1.10px;background:#217346;"></div>
<div class="r" style="left:56.20px;top:143.80px;width:1.10px;height:8.80px;background:#217346;"></div>
<div class="r" style="left:81.00px;top:144.20px;width:1.10px;height:8.20px;background:#217346;"></div>
<div class="r" style="left:80.40px;top:151.00px;width:2.30px;height:2.30px;background:#217346;border-radius:1px;box-shadow:0 0 0 0.5px #fff;"></div>
<div class="r" style="left:746.00px;top:129.70px;width:8.00px;height:302.60px;background:#e6f0f0;"></div>
<div class="r" style="left:746.60px;top:131.00px;width:6.60px;height:300.50px;background:#fafafa;border-radius:3px;"></div>
<div class="r" style="left:748.30px;top:137.20px;width:3.40px;height:280.00px;background:#666;border-radius:1.7px;"></div>
<svg class="r" style="left:748.00px;top:132.00px;" width="4" height="3" viewBox="0 0 4 3"><path d="M0.2 2.6 L2 0.2 L3.8 2.6Z" fill="#444"/></svg>
<svg class="r" style="left:748.00px;top:427.60px;" width="4" height="3" viewBox="0 0 4 3"><path d="M0.2 0.2 L2 2.6 L3.8 0.2Z" fill="#444"/></svg>
<div class="r" style="left:47.00px;top:432.30px;width:707.00px;height:13.70px;background:#ddeeed;"></div>
<svg class="r" style="left:57.60px;top:436.40px;" width="4" height="6" viewBox="0 0 4 6"><path d="M2.8 0.5 L0.7 2.6 L2.8 4.7" fill="none" stroke="#888" stroke-width="0.75"/></svg>
<svg class="r" style="left:70.20px;top:436.40px;" width="4" height="6" viewBox="0 0 4 6"><path d="M0.7 0.5 L2.8 2.6 L0.7 4.7" fill="none" stroke="#888" stroke-width="0.75"/></svg>
<div class="r" style="left:129.00px;top:432.00px;width:26.00px;height:13.20px;background:#fff;border-radius:0 0 2px 2px;box-shadow:0 0.5px 1px rgba(0,0,0,0.15);"></div>
<div class="r" style="left:132.00px;top:442.10px;width:20.00px;height:1.00px;background:#217346;"></div>
<div class="r" style="left:188.00px;top:435.50px;width:0.50px;height:7.00px;background:#d0dada;"></div>
<div class="r" style="left:255.00px;top:435.50px;width:0.50px;height:7.00px;background:#d0dada;"></div>
<div class="r" style="left:317.60px;top:435.50px;width:0.50px;height:7.00px;background:#d0dada;"></div>
<div class="r" style="left:380.60px;top:435.50px;width:0.50px;height:7.00px;background:#d0dada;"></div>
<svg class="r" style="left:471.60px;top:436.40px;" width="2" height="7" viewBox="0 0 2 7"><rect x="0.4" y="0.4" width="1" height="1" fill="#444"/><rect x="0.4" y="2.4" width="1" height="1" fill="#444"/><rect x="0.4" y="4.4" width="1" height="1" fill="#444"/></svg>
<div class="r" style="left:478.60px;top:435.30px;width:269.40px;height:7.00px;background:#fcfcfc;border-radius:3.5px;"></div>
<svg class="r" style="left:480.00px;top:436.80px;" width="3" height="4" viewBox="0 0 3 4"><path d="M2.6 0.2 L0.2 2 L2.6 3.8Z" fill="#555"/></svg>
<div class="r" style="left:484.00px;top:437.00px;width:202.00px;height:3.80px;background:#6b6b6b;border-radius:1.9px;"></div>
<svg class="r" style="left:741.20px;top:436.80px;" width="3" height="4" viewBox="0 0 3 4"><path d="M0.2 0.2 L2.6 2 L0.2 3.8Z" fill="#555"/></svg>
<div class="r" style="left:47.00px;top:446.00px;width:707.00px;height:9.40px;background:#f3f3f3;border-radius:0 0 2px 2px;"></div>
<svg class="r" style="left:69.80px;top:447.80px;" width="8" height="7" viewBox="0 0 8 7"><rect x="0.4" y="0.4" width="6" height="6" fill="none" stroke="#555" stroke-width="0.8"/><path d="M0.4 3.0 H6.4 M3.4 0.4 V6.4" stroke="#555" stroke-width="0.7"/><rect x="3.8" y="3.4" width="2.2" height="2.6" fill="#777"/></svg>
<div class="r" style="left:635.50px;top:446.30px;width:14.70px;height:8.70px;background:#dcdcdc;"></div>
<svg class="r" style="left:639.80px;top:447.50px;" width="7" height="7" viewBox="0 0 7 7"><rect x="0.2" y="0.2" width="5.8" height="6.4" rx="0.8" fill="#5a5a5a"/><path d="M3.1 0.6 V6.2 M0.6 2.3 H5.6 M0.6 4.4 H5.6" stroke="#9a9a9a" stroke-width="0.45"/></svg>
<svg class="r" style="left:655.10px;top:447.50px;" width="7" height="7" viewBox="0 0 7 7"><rect x="0.4" y="0.4" width="5.8" height="6.2" rx="0.8" fill="none" stroke="#5a5a5a" stroke-width="0.9"/><rect x="1.2" y="1.6" width="4.2" height="4.4" fill="#6a6a6a"/><path d="M2.6 1.6 V6 M4.0 1.6 V6" stroke="#aaa" stroke-width="0.4"/></svg>
<svg class="r" style="left:670.10px;top:447.50px;" width="7" height="7" viewBox="0 0 7 7"><rect x="0.4" y="0.4" width="6.0" height="6.2" rx="1" fill="none" stroke="#5a5a5a" stroke-width="0.9"/><path d="M4.6 2.2 V4.0 H1.8 M2.8 3.0 L1.8 4.0 L2.8 5.0" fill="none" stroke="#5a5a5a" stroke-width="0.8"/></svg>
<div class="r" style="left:684.00px;top:451.20px;width:2.00px;height:0.60px;background:#555;"></div>
<div class="r" style="left:689.00px;top:451.10px;width:37.00px;height:0.70px;background:#888;"></div>
<div class="r" style="left:707.40px;top:449.00px;width:1.30px;height:4.60px;background:#444;"></div>
<svg class="r" style="left:728.80px;top:449.60px;" width="3" height="3" viewBox="0 0 3 3"><path d="M0.2 0.2 L2.6 1.5 L0.2 2.8Z" fill="#555"/></svg>
<svg width="800" height="487" style="position:absolute;left:0;top:0" font-family="Liberation Sans">
<text transform="translate(64.50,45) scale(0.857,1.28)" font-size="5.10" fill="#2b2b2b" stroke="#2b2b2b" stroke-width="0.1">ER23_Fuel-Emissions_Register - Excel</text>
<text transform="translate(349.20,45) scale(0.978,1.28)" font-size="5.10" fill="#555" stroke="#555" stroke-width="0.1">Search</text>
<text transform="translate(676.80,45) scale(1.070,1.2)" font-size="4.80" fill="#fff">Sign in</text>
<text transform="translate(54.70,63) scale(1.000,1.28)" font-size="5.10" fill="#2b2b2b" stroke="#2b2b2b" stroke-width="0.1">File</text>
<text transform="translate(72.40,63) scale(1.051,1.28)" font-size="5.10" fill="#2b2b2b" stroke="#2b2b2b" stroke-width="0.1">Home</text>
<text transform="translate(94.20,63) scale(1.000,1.28)" font-size="5.10" fill="#2b2b2b" stroke="#2b2b2b" stroke-width="0.1">Insert</text>
<text transform="translate(114.70,63) scale(0.953,1.28)" font-size="5.10" fill="#2b2b2b" stroke="#2b2b2b" stroke-width="0.1">Page Layout</text>
<text transform="translate(150.10,63) scale(0.979,1.28)" font-size="5.10" fill="#2b2b2b" stroke="#2b2b2b" stroke-width="0.1">Formulas</text>
<text transform="translate(178.30,63) scale(1.003,1.28)" font-size="5.10" fill="#2b2b2b" stroke="#2b2b2b" stroke-width="0.1">Data</text>
<text transform="translate(196.80,63) scale(0.939,1.28)" font-size="5.10" fill="#2b2b2b" stroke="#2b2b2b" stroke-width="0.1">Review</text>
<text transform="translate(220.00,63) scale(0.958,1.28)" font-size="5.10" fill="#2b2b2b" stroke="#2b2b2b" stroke-width="0.1">View</text>
<text transform="translate(237.30,63) scale(1.030,1.28)" font-size="5.10" fill="#2b2b2b" stroke="#2b2b2b" stroke-width="0.1">Help</text>
<text transform="translate(255.50,63) scale(1.053,1.28)" font-size="5.10" fill="#2b2b2b" stroke="#2b2b2b" stroke-width="0.1">Acrobat</text>
<text transform="translate(281.40,63) scale(0.996,1.28)" font-size="5.10" fill="#2b2b2b" stroke="#2b2b2b" stroke-width="0.1">Power Pivot</text>
<text transform="translate(731.20,62) scale(0.867,1.28)" font-size="5.10" fill="#f4f8f4">Share</text>
<text transform="translate(80.90,109) scale(1.000,1.28)" font-size="4.60" fill="#444" stroke="#444" stroke-width="0.1" text-anchor="middle">Clipboard</text>
<text transform="translate(158.75,109) scale(1.000,1.28)" font-size="4.60" fill="#444" stroke="#444" stroke-width="0.1" text-anchor="middle">Font</text>
<text transform="translate(261.00,109) scale(1.000,1.28)" font-size="4.60" fill="#444" stroke="#444" stroke-width="0.1" text-anchor="middle">Alignment</text>
<text transform="translate(349.00,109) scale(1.000,1.28)" font-size="4.60" fill="#444" stroke="#444" stroke-width="0.1" text-anchor="middle">Number</text>
<text transform="translate(420.40,109) scale(1.000,1.28)" font-size="4.60" fill="#444" stroke="#444" stroke-width="0.1" text-anchor="middle">Styles</text>
<text transform="translate(486.00,109) scale(1.000,1.28)" font-size="4.60" fill="#444" stroke="#444" stroke-width="0.1" text-anchor="middle">Cells</text>
<text transform="translate(555.40,109) scale(1.000,1.28)" font-size="4.60" fill="#444" stroke="#444" stroke-width="0.1" text-anchor="middle">Editing</text>
<text transform="translate(608.30,109) scale(1.000,1.28)" font-size="4.60" fill="#444" stroke="#444" stroke-width="0.1" text-anchor="middle">Add-ins</text>
<text transform="translate(657.50,109) scale(1.000,1.28)" font-size="4.60" fill="#444" stroke="#444" stroke-width="0.1" text-anchor="middle">Adobe Acrobat</text>
<text transform="translate(57.20,92) scale(0.828,1.28)" font-size="5.10" fill="#333" stroke="#333" stroke-width="0.1">Paste</text>
<text transform="translate(80.00,76) scale(1.008,1.28)" font-size="5.10" fill="#333" stroke="#333" stroke-width="0.1">Cut</text>
<text transform="translate(80.00,88) scale(0.941,1.28)" font-size="5.10" fill="#333" stroke="#333" stroke-width="0.1">Copy</text>
<text transform="translate(80.50,100) scale(0.884,1.28)" font-size="5.10" fill="#333" stroke="#333" stroke-width="0.1">Format Painter</text>
<text transform="translate(120.80,79) scale(1.000,1.28)" font-size="4.80" fill="#333" stroke="#333" stroke-width="0.1">Calibri</text>
<text transform="translate(169.00,79) scale(1.000,1.28)" font-size="4.80" fill="#333" stroke="#333" stroke-width="0.1">10</text>
<text transform="translate(186.00,80) scale(1.000,1.28)" font-size="7.00" fill="#444" stroke="#444" stroke-width="0.1">A</text>
<text transform="translate(196.00,80) scale(1.000,1.28)" font-size="6.00" fill="#444" stroke="#444" stroke-width="0.1">A</text>
<text transform="translate(123.60,94) scale(1.000,1.28)" font-size="5.40" fill="#555" font-weight="700" stroke="#555" stroke-width="0.1">B</text>
<text transform="translate(133.20,94) scale(1.000,1.28)" font-size="5.40" fill="#555" stroke="#555" stroke-width="0.1" font-style="italic">I</text>
<text transform="translate(142.20,94) scale(1.000,1.28)" font-size="5.20" fill="#444" stroke="#444" stroke-width="0.1">U</text>
<text transform="translate(273.20,79) scale(0.891,1.28)" font-size="5.10" fill="#333" stroke="#333" stroke-width="0.1">Wrap Text</text>
<text transform="translate(273.20,94) scale(0.925,1.28)" font-size="5.10" fill="#333" stroke="#333" stroke-width="0.1">Merge &amp; Center</text>
<text transform="translate(325.80,80) scale(1.000,1.28)" font-size="4.80" fill="#333" stroke="#333" stroke-width="0.1">General</text>
<text transform="translate(341.20,94) scale(1.158,1.1)" font-size="6.80" fill="#666" stroke="#666" stroke-width="0.25">%</text>
<text transform="translate(387.00,91) scale(0.980,1.28)" font-size="5.10" fill="#333" stroke="#333" stroke-width="0.1">Conditional</text>
<text transform="translate(386.50,98) scale(0.944,1.28)" font-size="5.10" fill="#333" stroke="#333" stroke-width="0.1">Formatting</text>
<text transform="translate(415.80,91) scale(0.880,1.28)" font-size="5.10" fill="#333" stroke="#333" stroke-width="0.1">Format as</text>
<text transform="translate(420.00,98) scale(0.902,1.28)" font-size="5.10" fill="#333" stroke="#333" stroke-width="0.1">Table</text>
<text transform="translate(447.00,91) scale(1.000,1.28)" font-size="5.00" fill="#333" stroke="#333" stroke-width="0.1" text-anchor="middle">Cell</text>
<text transform="translate(438.80,98) scale(0.806,1.28)" font-size="5.10" fill="#333" stroke="#333" stroke-width="0.1">Styles</text>
<text transform="translate(469.00,91) scale(1.000,1.28)" font-size="5.10" fill="#333" stroke="#333" stroke-width="0.1" text-anchor="middle">Insert</text>
<text transform="translate(485.60,91) scale(1.000,1.28)" font-size="5.10" fill="#333" stroke="#333" stroke-width="0.1" text-anchor="middle">Delete</text>
<text transform="translate(502.70,91) scale(1.000,1.28)" font-size="5.10" fill="#333" stroke="#333" stroke-width="0.1" text-anchor="middle">Format</text>
<text transform="translate(518.80,77) scale(1.000,1.15)" font-size="7.20" fill="#444">Σ</text>
<text transform="translate(526.00,77) scale(0.953,1.28)" font-size="5.10" fill="#333" stroke="#333" stroke-width="0.1">AutoSum</text>
<text transform="translate(526.00,88) scale(0.998,1.28)" font-size="5.10" fill="#333" stroke="#333" stroke-width="0.1">Fill</text>
<text transform="translate(526.00,99) scale(0.903,1.28)" font-size="5.10" fill="#333" stroke="#333" stroke-width="0.1">Clear</text>
<text transform="translate(560.30,91) scale(0.917,1.28)" font-size="5.10" fill="#333" stroke="#333" stroke-width="0.1">Sort &amp;</text>
<text transform="translate(559.00,98) scale(1.015,1.28)" font-size="5.10" fill="#333" stroke="#333" stroke-width="0.1">Filter</text>
<text transform="translate(577.40,91) scale(0.936,1.28)" font-size="5.10" fill="#333" stroke="#333" stroke-width="0.1">Find &amp;</text>
<text transform="translate(576.00,98) scale(0.974,1.28)" font-size="5.10" fill="#333" stroke="#333" stroke-width="0.1">Select</text>
<text transform="translate(600.00,91) scale(0.948,1.28)" font-size="5.10" fill="#333" stroke="#333" stroke-width="0.1">Add-ins</text>
<text transform="translate(627.00,91) scale(0.847,1.28)" font-size="5.10" fill="#333" stroke="#333" stroke-width="0.1">Create PDF</text>
<text transform="translate(624.20,98) scale(0.859,1.28)" font-size="5.10" fill="#333" stroke="#333" stroke-width="0.1">and Share link</text>
<text transform="translate(657.10,91) scale(0.852,1.28)" font-size="5.10" fill="#333" stroke="#333" stroke-width="0.1">Create PDF and</text>
<text transform="translate(654.80,99) scale(0.893,1.28)" font-size="5.10" fill="#333" stroke="#333" stroke-width="0.1">Share via Outlook</text>
<text transform="translate(52.50,123) scale(1.000,1.28)" font-size="4.90" fill="#333" stroke="#333" stroke-width="0.1">A2</text>
<text transform="translate(68.70,135) scale(1.000,1.36)" font-size="4.90" fill="#3a8a5a" text-anchor="middle">A</text>
<text transform="translate(97.45,135) scale(1.000,1.36)" font-size="4.90" fill="#777" text-anchor="middle">B</text>
<text transform="translate(127.20,135) scale(1.000,1.36)" font-size="4.90" fill="#777" text-anchor="middle">C</text>
<text transform="translate(155.20,135) scale(1.000,1.36)" font-size="4.90" fill="#777" text-anchor="middle">D</text>
<text transform="translate(182.25,135) scale(1.000,1.36)" font-size="4.90" fill="#777" text-anchor="middle">E</text>
<text transform="translate(233.10,135) scale(1.000,1.36)" font-size="4.90" fill="#777" text-anchor="middle">F</text>
<text transform="translate(300.00,135) scale(1.000,1.36)" font-size="4.90" fill="#777" text-anchor="middle">G</text>
<text transform="translate(350.25,135) scale(1.000,1.36)" font-size="4.90" fill="#777" text-anchor="middle">H</text>
<text transform="translate(393.45,135) scale(1.000,1.36)" font-size="4.90" fill="#777" text-anchor="middle">I</text>
<text transform="translate(436.85,135) scale(1.000,1.36)" font-size="4.90" fill="#777" text-anchor="middle">J</text>
<text transform="translate(520.60,135) scale(1.000,1.36)" font-size="4.90" fill="#777" text-anchor="middle">K</text>
<text transform="translate(601.90,135) scale(1.000,1.36)" font-size="4.90" fill="#777" text-anchor="middle">L</text>
<text transform="translate(660.75,135) scale(1.000,1.36)" font-size="4.90" fill="#777" text-anchor="middle">M</text>
<text transform="translate(712.45,135) scale(1.000,1.36)" font-size="4.90" fill="#777" text-anchor="middle">N</text>
<text transform="translate(735.20,135) scale(1.000,1.36)" font-size="4.90" fill="#777" text-anchor="middle">O</text>
<text transform="translate(51.60,143) scale(1.000,1.36)" font-size="5.00" fill="#4a4a4a" stroke="#4a4a4a" stroke-width="0.1" text-anchor="middle">1</text>
<text transform="translate(51.60,151) scale(1.000,1.36)" font-size="5.00" fill="#3a8a5a" stroke="#3a8a5a" stroke-width="0.1" text-anchor="middle">2</text>
<text transform="translate(51.60,158) scale(1.000,1.36)" font-size="5.00" fill="#4a4a4a" stroke="#4a4a4a" stroke-width="0.1" text-anchor="middle">3</text>
<text transform="translate(51.60,166) scale(1.000,1.36)" font-size="5.00" fill="#4a4a4a" stroke="#4a4a4a" stroke-width="0.1" text-anchor="middle">4</text>
<text transform="translate(51.60,173) scale(1.000,1.36)" font-size="5.00" fill="#4a4a4a" stroke="#4a4a4a" stroke-width="0.1" text-anchor="middle">5</text>
<text transform="translate(51.60,181) scale(1.000,1.36)" font-size="5.00" fill="#4a4a4a" stroke="#4a4a4a" stroke-width="0.1" text-anchor="middle">6</text>
<text transform="translate(51.60,189) scale(1.000,1.36)" font-size="5.00" fill="#4a4a4a" stroke="#4a4a4a" stroke-width="0.1" text-anchor="middle">7</text>
<text transform="translate(51.60,196) scale(1.000,1.36)" font-size="5.00" fill="#4a4a4a" stroke="#4a4a4a" stroke-width="0.1" text-anchor="middle">8</text>
<text transform="translate(51.60,204) scale(1.000,1.36)" font-size="5.00" fill="#4a4a4a" stroke="#4a4a4a" stroke-width="0.1" text-anchor="middle">9</text>
<text transform="translate(51.60,211) scale(1.000,1.36)" font-size="5.00" fill="#4a4a4a" stroke="#4a4a4a" stroke-width="0.1" text-anchor="middle">10</text>
<text transform="translate(51.60,219) scale(1.000,1.36)" font-size="5.00" fill="#4a4a4a" stroke="#4a4a4a" stroke-width="0.1" text-anchor="middle">11</text>
<text transform="translate(51.60,226) scale(1.000,1.36)" font-size="5.00" fill="#4a4a4a" stroke="#4a4a4a" stroke-width="0.1" text-anchor="middle">12</text>
<text transform="translate(51.60,234) scale(1.000,1.36)" font-size="5.00" fill="#4a4a4a" stroke="#4a4a4a" stroke-width="0.1" text-anchor="middle">13</text>
<text transform="translate(51.60,242) scale(1.000,1.36)" font-size="5.00" fill="#4a4a4a" stroke="#4a4a4a" stroke-width="0.1" text-anchor="middle">14</text>
<text transform="translate(51.60,249) scale(1.000,1.36)" font-size="5.00" fill="#4a4a4a" stroke="#4a4a4a" stroke-width="0.1" text-anchor="middle">15</text>
<text transform="translate(51.60,257) scale(1.000,1.36)" font-size="5.00" fill="#4a4a4a" stroke="#4a4a4a" stroke-width="0.1" text-anchor="middle">16</text>
<text transform="translate(51.60,264) scale(1.000,1.36)" font-size="5.00" fill="#4a4a4a" stroke="#4a4a4a" stroke-width="0.1" text-anchor="middle">17</text>
<text transform="translate(51.60,272) scale(1.000,1.36)" font-size="5.00" fill="#4a4a4a" stroke="#4a4a4a" stroke-width="0.1" text-anchor="middle">18</text>
<text transform="translate(51.60,279) scale(1.000,1.36)" font-size="5.00" fill="#4a4a4a" stroke="#4a4a4a" stroke-width="0.1" text-anchor="middle">19</text>
<text transform="translate(51.60,287) scale(1.000,1.36)" font-size="5.00" fill="#4a4a4a" stroke="#4a4a4a" stroke-width="0.1" text-anchor="middle">20</text>
<text transform="translate(51.60,295) scale(1.000,1.36)" font-size="5.00" fill="#4a4a4a" stroke="#4a4a4a" stroke-width="0.1" text-anchor="middle">21</text>
<text transform="translate(51.60,302) scale(1.000,1.36)" font-size="5.00" fill="#4a4a4a" stroke="#4a4a4a" stroke-width="0.1" text-anchor="middle">22</text>
<text transform="translate(51.60,310) scale(1.000,1.36)" font-size="5.00" fill="#4a4a4a" stroke="#4a4a4a" stroke-width="0.1" text-anchor="middle">23</text>
<text transform="translate(51.60,317) scale(1.000,1.36)" font-size="5.00" fill="#4a4a4a" stroke="#4a4a4a" stroke-width="0.1" text-anchor="middle">24</text>
<text transform="translate(51.60,325) scale(1.000,1.36)" font-size="5.00" fill="#4a4a4a" stroke="#4a4a4a" stroke-width="0.1" text-anchor="middle">25</text>
<text transform="translate(51.60,332) scale(1.000,1.36)" font-size="5.00" fill="#4a4a4a" stroke="#4a4a4a" stroke-width="0.1" text-anchor="middle">26</text>
<text transform="translate(51.60,340) scale(1.000,1.36)" font-size="5.00" fill="#4a4a4a" stroke="#4a4a4a" stroke-width="0.1" text-anchor="middle">27</text>
<text transform="translate(51.60,348) scale(1.000,1.36)" font-size="5.00" fill="#4a4a4a" stroke="#4a4a4a" stroke-width="0.1" text-anchor="middle">28</text>
<text transform="translate(51.60,355) scale(1.000,1.36)" font-size="5.00" fill="#4a4a4a" stroke="#4a4a4a" stroke-width="0.1" text-anchor="middle">29</text>
<text transform="translate(51.60,363) scale(1.000,1.36)" font-size="5.00" fill="#4a4a4a" stroke="#4a4a4a" stroke-width="0.1" text-anchor="middle">30</text>
<text transform="translate(51.60,370) scale(1.000,1.36)" font-size="5.00" fill="#4a4a4a" stroke="#4a4a4a" stroke-width="0.1" text-anchor="middle">31</text>
<text transform="translate(51.60,378) scale(1.000,1.36)" font-size="5.00" fill="#4a4a4a" stroke="#4a4a4a" stroke-width="0.1" text-anchor="middle">32</text>
<text transform="translate(51.60,385) scale(1.000,1.36)" font-size="5.00" fill="#4a4a4a" stroke="#4a4a4a" stroke-width="0.1" text-anchor="middle">33</text>
<text transform="translate(51.60,393) scale(1.000,1.36)" font-size="5.00" fill="#4a4a4a" stroke="#4a4a4a" stroke-width="0.1" text-anchor="middle">34</text>
<text transform="translate(51.60,401) scale(1.000,1.36)" font-size="5.00" fill="#4a4a4a" stroke="#4a4a4a" stroke-width="0.1" text-anchor="middle">35</text>
<text transform="translate(51.60,408) scale(1.000,1.36)" font-size="5.00" fill="#4a4a4a" stroke="#4a4a4a" stroke-width="0.1" text-anchor="middle">36</text>
<text transform="translate(51.60,416) scale(1.000,1.36)" font-size="5.00" fill="#4a4a4a" stroke="#4a4a4a" stroke-width="0.1" text-anchor="middle">37</text>
<text transform="translate(51.60,423) scale(1.000,1.36)" font-size="5.00" fill="#4a4a4a" stroke="#4a4a4a" stroke-width="0.1" text-anchor="middle">38</text>
<text transform="translate(51.60,431) scale(1.000,1.36)" font-size="5.00" fill="#4a4a4a" stroke="#4a4a4a" stroke-width="0.1" text-anchor="middle">39</text>
<text transform="translate(61.90,143) scale(0.881,1.3)" font-size="4.60" fill="#111" font-weight="700" stroke="#111" stroke-width="0.2">Reg №</text>
<text transform="translate(82.30,143) scale(1.039,1.3)" font-size="4.60" fill="#111" font-weight="700" stroke="#111" stroke-width="0.2">VRM  / VIN</text>
<text transform="translate(114.70,143) scale(1.039,1.3)" font-size="4.60" fill="#111" font-weight="700" stroke="#111" stroke-width="0.2">Type</text>
<text transform="translate(141.90,143) scale(0.947,1.3)" font-size="4.60" fill="#111" font-weight="700" stroke="#111" stroke-width="0.2">Fuel Type</text>
<text transform="translate(170.60,143) scale(0.959,1.3)" font-size="4.60" fill="#111" font-weight="700" stroke="#111" stroke-width="0.2">Ownersl</text>
<text transform="translate(196.60,143) scale(0.971,1.3)" font-size="4.60" fill="#111" font-weight="700" stroke="#111" stroke-width="0.2">Model / Description</text>
<text transform="translate(272.50,143) scale(0.892,1.3)" font-size="4.60" fill="#111" font-weight="700" stroke="#111" stroke-width="0.2">Service Frequency</text>
<text transform="translate(329.80,143) scale(1.124,1.3)" font-size="4.60" fill="#111" font-weight="700" stroke="#111" stroke-width="0.2">Service Due</text>
<text transform="translate(373.50,143) scale(0.926,1.3)" font-size="4.60" fill="#111" font-weight="700" stroke="#111" stroke-width="0.2">MOT Due</text>
<text transform="translate(416.60,143) scale(0.912,1.3)" font-size="4.60" fill="#111" font-weight="700" stroke="#111" stroke-width="0.2">Tax Due</text>
<text transform="translate(459.10,143) scale(0.972,1.3)" font-size="4.60" fill="#111" font-weight="700" stroke="#111" stroke-width="0.2">Comments</text>
<text transform="translate(584.00,143) scale(0.814,1.3)" font-size="4.60" fill="#111" font-weight="700" stroke="#111" stroke-width="0.2">Currently in use</text>
<text transform="translate(622.00,143) scale(0.958,1.3)" font-size="5.00" fill="#222" stroke="#222" stroke-width="0.15">Tax requirements / exemptions</text>
<text transform="translate(94.40,441) scale(1.058,1.28)" font-size="5.10" fill="#333" stroke="#333" stroke-width="0.1">Instructions</text>
<text transform="translate(132.00,440) scale(0.980,1.28)" font-size="5.10" fill="#222" font-weight="700" stroke="#222" stroke-width="0.1">Vehicles</text>
<text transform="translate(162.00,441) scale(0.959,1.28)" font-size="5.10" fill="#333" stroke="#333" stroke-width="0.1">Fuel_Log</text>
<text transform="translate(193.00,441) scale(0.968,1.28)" font-size="5.10" fill="#333" stroke="#333" stroke-width="0.1">Fuel_Emissions_Analysis</text>
<text transform="translate(260.00,441) scale(1.019,1.28)" font-size="5.10" fill="#333" stroke="#333" stroke-width="0.1">Overall-Usage-Graphs</text>
<text transform="translate(322.00,441) scale(1.033,1.28)" font-size="5.10" fill="#333" stroke="#333" stroke-width="0.1">Vehicle-Usage-Graphs</text>
<text transform="translate(398.00,442) scale(1.000,1.28)" font-size="6.50" fill="#444" stroke="#444" stroke-width="0.1" text-anchor="middle">+</text>
<text transform="translate(51.00,454) scale(0.800,1.28)" font-size="5.10" fill="#333" stroke="#333" stroke-width="0.1">Ready</text>
<text transform="translate(737.00,454) scale(0.767,1.28)" font-size="5.10" fill="#333" stroke="#333" stroke-width="0.1">100%</text>
</svg>
</div></body></html>
